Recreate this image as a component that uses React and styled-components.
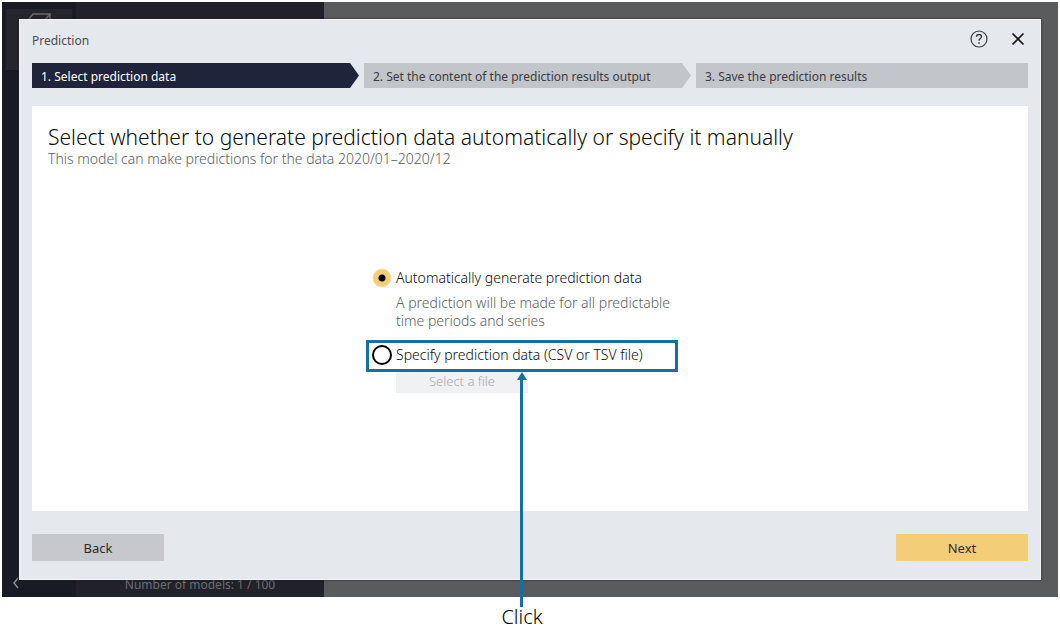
import React, { useState } from "react";
import styled, { createGlobalStyle, css } from "styled-components";

const Global = createGlobalStyle`
  *, *::before, *::after { box-sizing: border-box; }
  body {
    margin: 0;
    background: #fff;
    color: #0c0c0c;
    font-family: "Noto Sans", "Open Sans", sans-serif;
    font-size: 14px;
    font-weight: 300;
    line-height: 18px;
  }
  button, input { font: inherit; color: inherit; }
  h1, h2, p, ol { margin: 0; padding: 0; font-weight: inherit; }
`;

const Page = styled.div`
  min-height: 100vh;
  padding: 2px 2px 30px;
  display: grid;
`;

const Workspace = styled.div`
  grid-area: 1 / 1;
  display: grid;
  grid-template-columns: 74px 248px 1fr;
  background: #5a5b5d;
  overflow: hidden;
`;

const Rail = styled.nav`
  display: flex;
  flex-direction: column;
  justify-content: space-between;
  padding: 7px 4px 4px;
  background: #181b23;
  color: #6a6a6c;
`;

const RailTile = styled.a`
  display: flex;
  flex-direction: column;
  align-items: center;
  height: 61px;
  padding-top: 4px;
  background: #25252d;
  color: inherit;
`;

const RailCollapse = styled.button`
  display: flex;
  width: 20px;
  padding: 4px 6px;
  border: 0;
  background: none;
`;

const ModelPanel = styled.aside`
  display: flex;
  align-items: flex-end;
  justify-content: center;
  padding-bottom: 3px;
  background: #212129;
  color: #6c6c6e;
  font-size: 12px;
  font-weight: 400;
`;

const Dialog = styled.main`
  grid-area: 1 / 1;
  z-index: 1;
  display: flex;
  flex-direction: column;
  margin: 17px;
  padding: 10px 12px 18px;
  border: 1px solid #f2f4f7;
  background: #e5e8ed;
  box-shadow: 0 0 2px #1c1c1c;
`;

const TitleBar = styled.header`
  display: flex;
  align-items: flex-start;
  justify-content: space-between;
  height: 20px;
  color: #4c4c4e;
`;

const Title = styled.h1`
  padding-top: 2px;
  font-size: 12px;
  font-weight: 400;
`;

const TitleActions = styled.div`
  display: flex;
  gap: 20px;
`;

const IconButton = styled.button`
  display: flex;
  padding: 0;
  border: 0;
  background: none;
`;

const Steps = styled.ol`
  display: flex;
  gap: 5px;
  margin: 13px 0 18px;
  list-style: none;
`;

const Step = styled.li`
  flex: 1 1 23px;
  height: 25px;
  padding: 0 9px;
  background: #c2c5ca;
  color: #3c3c40;
  font-size: 12px;
  font-weight: 400;
  line-height: 28px;
  white-space: nowrap;
  ${(p) => p.$pointed && css`
    flex-basis: 18px;
    clip-path: polygon(0 0, calc(100% - 9px) 0, 100% 50%, calc(100% - 9px) 100%, 0 100%);
  `}
  ${(p) => p.$current && css`
    background: #20243a;
    color: #fff;
  `}
`;

const Content = styled.section`
  flex: 1;
  padding: 18px 16px;
  background: #fff;
`;

const Heading = styled.h2`
  font-size: 21px;
  line-height: 26px;
`;

const Note = styled.p`
  color: #5c5d61;
`;

const Options = styled.form`
  width: 316px;
  margin: 100px auto 0;
`;

const Option = styled.label`
  display: flex;
  align-items: center;
  gap: 4px;
  height: 20px;
  white-space: nowrap;
`;

const Radio = styled.input`
  appearance: none;
  flex: none;
  width: 20px;
  height: 20px;
  margin: 0;
  border: 2px solid #000;
  border-radius: 50%;
  background: #fff;
  &:checked {
    border: 0;
    background: radial-gradient(circle, #000 3px, #f3cd78 4px, #f3cd78 8px, transparent 10px);
  }
`;

const OptionHelp = styled.p`
  width: 304px;
  margin: 6px 0 15px;
  padding-left: 24px;
  color: #5c5d61;
`;

const Marked = styled.div`
  position: relative;
`;

const Callout = styled.div`
  position: absolute;
  z-index: 2;
  top: -5px;
  left: -6px;
  right: 10px;
  display: flex;
  flex-direction: column;
  align-items: center;
  pointer-events: none;
`;

const CalloutFrame = styled.div`
  align-self: stretch;
  height: 32px;
  border: 3px solid #166fa0;
`;

const CalloutArrow = styled.svg`
  display: block;
  width: 10px;
  height: 235px;
  fill: #166fa0;
`;

const CalloutText = styled.p`
  color: #000;
  font-size: 20px;
  line-height: 20px;
`;

const FileButton = styled.button`
  display: block;
  width: 132px;
  height: 24px;
  margin: 4px 0 0 24px;
  padding: 0;
  border: 0;
  background: #f0f1f3;
  color: #a8a9ac;
  font-size: 13px;
  &:enabled { color: #1c1c1c; }
`;

const Footer = styled.footer`
  display: flex;
  justify-content: space-between;
  margin-top: 23px;
`;

const FooterButton = styled.button`
  width: 132px;
  height: 27px;
  padding: 0;
  border: 0;
  border-radius: 1px;
  background: ${(p) => (p.$primary ? "#f3cd78" : "#c7c8cd")};
  color: #2c2c2e;
  font-size: 13px;
  font-weight: 400;
`;

const steps = [
  "1. Select prediction data",
  "2. Set the content of the prediction results output",
  "3. Save the prediction results",
];

export default function App() {
  const [source, setSource] = useState("auto");
  return (
    <>
      <Global />
      <Page>
        <Workspace>
          <Rail aria-label="Main">
            <RailTile href="#projects" aria-label="Projects">
              <svg width="26" height="22" viewBox="0 0 26 22" fill="none" stroke="currentColor" strokeWidth="1.5">
                <path d="M2 7 7 1H24V13L19 19H2ZM2 7H19V19M19 7 24 1" />
              </svg>
            </RailTile>
            <RailCollapse type="button" aria-label="Collapse">
              <svg width="8" height="12" viewBox="0 0 8 12" fill="none" stroke="#8a8a8c" strokeWidth="1.5">
                <path d="M6 1 2 6l4 5" />
              </svg>
            </RailCollapse>
          </Rail>
          <ModelPanel>Number of models: 1 / 100</ModelPanel>
        </Workspace>

        <Dialog role="dialog" aria-labelledby="dialog-title">
          <TitleBar>
            <Title id="dialog-title">Prediction</Title>
            <TitleActions>
              <IconButton type="button" aria-label="Help">
                <svg width="18" height="18" viewBox="0 0 18 18" fill="none" stroke="#3c3c3e">
                  <circle cx="9" cy="9" r="8" strokeWidth="1.2" />
                  <path d="M6.5 6.8C6.5 5.3 7.5 4.5 9 4.5s2.5.8 2.5 2.1c0 1.9-2.5 2-2.5 4.2" strokeWidth="1.4" />
                  <path d="M9 12.2v1.6" strokeWidth="1.6" />
                </svg>
              </IconButton>
              <IconButton type="button" aria-label="Close">
                <svg width="20" height="18" viewBox="0 0 20 18" fill="none" stroke="#151515" strokeWidth="1.7">
                  <path d="m4.5 3.5 11 11M15.5 3.5l-11 11" />
                </svg>
              </IconButton>
            </TitleActions>
          </TitleBar>

          <Steps>
            {steps.map((label, i) => (
              <Step key={label} $current={i === 0} $pointed={i < steps.length - 1} aria-current={i === 0 ? "step" : undefined}>
                {label}
              </Step>
            ))}
          </Steps>

          <Content>
            <Heading>Select whether to generate prediction data automatically or specify it manually</Heading>
            <Note>This model can make predictions for the data 2020/01–2020/12</Note>
            <Options>
              <Option>
                <Radio type="radio" name="source" checked={source === "auto"} onChange={() => setSource("auto")} />
                Automatically generate prediction data
              </Option>
              <OptionHelp>A prediction will be made for all predictable time periods and series</OptionHelp>
              <Marked>
                <Option>
                  <Radio type="radio" name="source" checked={source === "file"} onChange={() => setSource("file")} />
                  Specify prediction data (CSV or TSV file)
                </Option>
                <Callout>
                  <CalloutFrame />
                  <CalloutArrow viewBox="0 0 10 235">
                    <path d="M5 0 10 8H0ZM3 8H6V235H3Z" />
                  </CalloutArrow>
                  <CalloutText>Click</CalloutText>
                </Callout>
              </Marked>
              <FileButton type="button" disabled={source !== "file"}>Select a file</FileButton>
            </Options>
          </Content>

          <Footer>
            <FooterButton type="button">Back</FooterButton>
            <FooterButton type="button" $primary>Next</FooterButton>
          </Footer>
        </Dialog>
      </Page>
    </>
  );
}
